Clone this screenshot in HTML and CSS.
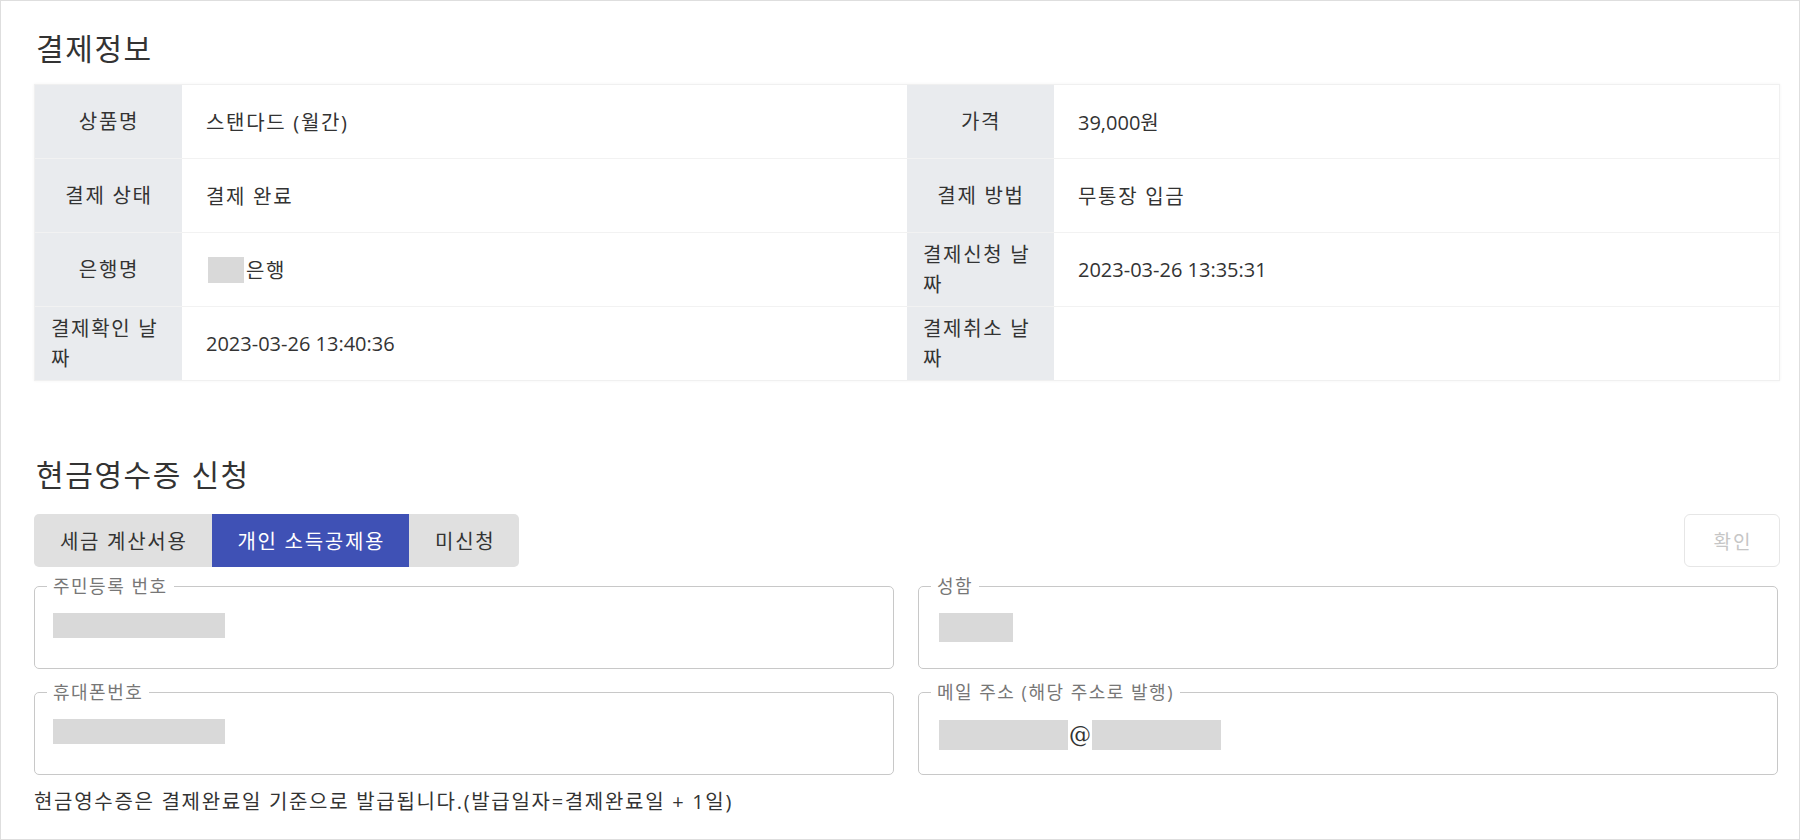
FILE: index.html
```html
<!DOCTYPE html>
<html lang="ko">
<head>
<meta charset="utf-8">
<title>결제정보</title>
<link rel="stylesheet" href="styles.css">
</head>
<body>
<div class="page">
  <h2 class="title">결제정보</h2>
  <div class="info">
    <div class="lbl">상품명</div><div class="val">스탠다드 (월간)</div>
    <div class="lbl">가격</div><div class="val num">39,000원</div>
    <div class="lbl">결제 상태</div><div class="val">결제 완료</div>
    <div class="lbl">결제 방법</div><div class="val">무통장 입금</div>
    <div class="lbl">은행명</div><div class="val"><span class="mask bank"></span>은행</div>
    <div class="lbl">결제신청 날짜</div><div class="val num">2023-03-26 13:35:31</div>
    <div class="lbl">결제확인 날짜</div><div class="val num">2023-03-26 13:40:36</div>
    <div class="lbl">결제취소 날짜</div><div class="val"></div>
  </div>

  <h2 class="title title2">현금영수증 신청</h2>
  <div class="bar">
    <div class="tabs">
      <button class="tab">세금 계산서용</button>
      <button class="tab active">개인 소득공제용</button>
      <button class="tab">미신청</button>
    </div>
    <button class="ok" disabled>확인</button>
  </div>

  <div class="fields">
    <fieldset class="field">
      <legend>주민등록 번호</legend>
      <div class="fv"><span class="mask m-id"></span></div>
    </fieldset>
    <fieldset class="field right">
      <legend>성함</legend>
      <div class="fv"><span class="mask m-name"></span></div>
    </fieldset>
    <fieldset class="field">
      <legend>휴대폰번호</legend>
      <div class="fv"><span class="mask m-phone"></span></div>
    </fieldset>
    <fieldset class="field right">
      <legend>메일 주소 (해당 주소로 발행)</legend>
      <div class="fv"><span class="mask m-mail"></span><span class="at">@</span><span class="mask m-mail"></span></div>
    </fieldset>
  </div>

  <p class="note">현금영수증은 결제완료일 기준으로 발급됩니다.(발급일자=결제완료일 + 1일)</p>
</div>
</body>
</html>
```

FILE: styles.css
```css
* { box-sizing: border-box; }
html, body { margin: 0; padding: 0; background: #fff; }
body {
  font-family: "Open Sans", "Noto Sans CJK KR", sans-serif;
  color: #333;
  font-size: 20px;
  letter-spacing: 1.7px;
}
.page {
  width: 1800px;
  height: 840px;
  border: 1px solid #dedede;
  padding: 30px 19px 0 33px;
  overflow: hidden;
}
.title {
  margin: 0 0 17px;
  padding-left: 2px;
  font-size: 30px;
  line-height: 36px;
  font-weight: 400;
  letter-spacing: 1.6px;
  color: #333;
}
.title2 { margin-top: 76px; margin-bottom: 21px; }

.info {
  display: grid;
  grid-template-columns: 147px 1fr 147px 1fr;
  grid-auto-rows: 73px;
  row-gap: 1px;
  background: #f2f2f2;
  border: 1px solid #f0f0f0;
  box-shadow: 0 0 3px rgba(0, 0, 0, 0.05);
}
.lbl {
  background: #e9ebee;
  display: flex;
  align-items: center;
  justify-content: center;
  padding: 0 15px 0 16px;
  line-height: 30px;
}
.val {
  background: #fff;
  display: flex;
  align-items: center;
  padding: 0 24px;
}
.val.num { letter-spacing: 0; }
.mask {
  display: inline-block;
  background: #d9d9d9;
}
.bank { width: 36px; height: 26px; margin-left: 2px; margin-right: 2px; }

.bar {
  display: flex;
  justify-content: space-between;
  align-items: center;
}
.tabs {
  display: flex;
  border-radius: 5px;
  overflow: hidden;
}
.tab {
  border: 0;
  margin: 0;
  height: 53px;
  padding: 0 24px 0 26px;
  background: #e0e0e0;
  color: #333;
  font: inherit;
  font-size: 20px;
  letter-spacing: 1.7px;
}
.tab.active { background: #3f51b5; color: #fff; }
.ok {
  width: 96px;
  height: 53px;
  border: 1px solid #e6e6e6;
  border-radius: 6px;
  background: #fff;
  color: #c6c6c6;
  font: inherit;
  font-size: 19px;
  letter-spacing: 2px;
  padding: 0 0 0 2px;
}

.fields {
  display: grid;
  grid-template-columns: 1fr 1fr;
  column-gap: 24px;
  row-gap: 12px;
  margin: 8px 2px 0 0;
}
.field {
  margin: 0;
  padding: 0 0 13px;
  border: 1px solid #c8c8c8;
  border-radius: 5px;
  min-width: 0;
}
.field legend {
  margin-left: 12px;
  padding: 0 6px;
  font-size: 18px;
  line-height: 22px;
  letter-spacing: 1.5px;
  color: #777;
}
.fv {
  height: 58px;
  padding: 16px 18px 0;
  display: flex;
  align-items: flex-start;
  letter-spacing: 0;
}
.field.right .fv { padding-left: 20px; }
.m-id, .m-phone { width: 172px; height: 25px; }
.m-name { width: 74px; height: 29px; }
.m-mail { width: 129px; height: 30px; margin-top: 1px; }
.at {
  font-family: "DejaVu Serif", serif;
  font-size: 22px;
  line-height: 32px;
  color: #333;
  padding: 0 1px;
}
.note {
  margin: 12px 0 0;
  line-height: 30px;
  font-size: 20px;
  color: #333;
}
```
